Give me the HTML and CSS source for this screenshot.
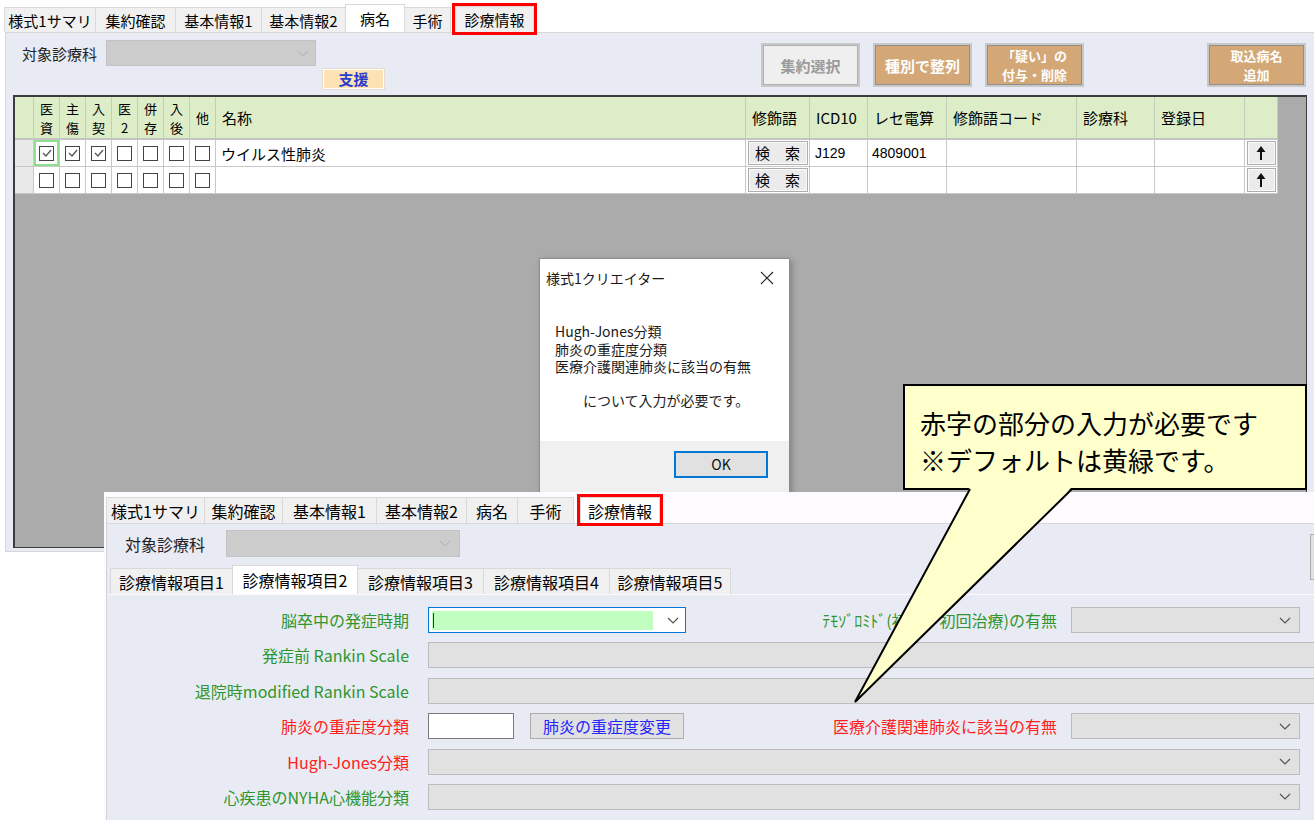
FILE: index.html
```html
<!DOCTYPE html>
<html lang="ja">
<head>
<meta charset="utf-8">
<title>様式1クリエイター</title>
<link rel="stylesheet" href="styles.css">
</head>
<body>
<div class="screen">

  <section class="win1">
    <nav class="tabs1">
      <span class="tab t1-sum">様式1サマリ</span>
      <span class="tab t1-agg">集約確認</span>
      <span class="tab t1-b1">基本情報1</span>
      <span class="tab t1-b2">基本情報2</span>
      <span class="tab t1-dis active">病名</span>
      <span class="tab t1-op">手術</span>
      <span class="tab t1-info marked">診療情報</span>
    </nav>
    <div class="panel1">
      <div class="toolbar">
        <div class="dept">
          <div class="dept-row">
            <span class="lbl1">対象診療科</span>
            <div class="combo1">
              <svg class="chev" width="12" height="7" viewBox="0 0 12 7"><path d="M1 1 L6 6 L11 1" fill="none" stroke="#b8b8b8" stroke-width="1.2"/></svg>
            </div>
          </div>
          <div class="shien">支援</div>
        </div>
        <div class="actions">
          <div class="abtn abtn-dis">集約選択</div>
          <div class="abtn tan">種別で整列</div>
          <div class="abtn tan two"><span>「疑い」の</span><span>付与・削除</span></div>
          <div class="abtn tan two far"><span>取込病名</span><span>追加</span></div>
        </div>
      </div>

      <div class="grid">
        <div class="gtable">
          <div class="hc rh"></div>
          <div class="hc vt"><span>医</span><span>資</span></div>
          <div class="hc vt"><span>主</span><span>傷</span></div>
          <div class="hc vt"><span>入</span><span>契</span></div>
          <div class="hc vt"><span>医</span><span>2</span></div>
          <div class="hc vt"><span>併</span><span>存</span></div>
          <div class="hc vt"><span>入</span><span>後</span></div>
          <div class="hc vt"><span>他</span></div>
          <div class="hc">名称</div>
          <div class="hc">修飾語</div>
          <div class="hc">ICD10</div>
          <div class="hc">レセ電算</div>
          <div class="hc">修飾語コード</div>
          <div class="hc">診療科</div>
          <div class="hc">登録日</div>
          <div class="hc"></div>

          <div class="dc rh"></div>
          <div class="dc cbc focus"><span class="cb"><svg width="12" height="12" viewBox="0 0 12 12"><path d="M2 6 L5 9 L10 3" fill="none" stroke="#555" stroke-width="1.3"/></svg></span></div>
          <div class="dc cbc"><span class="cb"><svg width="12" height="12" viewBox="0 0 12 12"><path d="M2 6 L5 9 L10 3" fill="none" stroke="#555" stroke-width="1.3"/></svg></span></div>
          <div class="dc cbc"><span class="cb"><svg width="12" height="12" viewBox="0 0 12 12"><path d="M2 6 L5 9 L10 3" fill="none" stroke="#555" stroke-width="1.3"/></svg></span></div>
          <div class="dc cbc"><span class="cb"></span></div>
          <div class="dc cbc"><span class="cb"></span></div>
          <div class="dc cbc"><span class="cb"></span></div>
          <div class="dc cbc"><span class="cb"></span></div>
          <div class="dc">ウイルス性肺炎</div>
          <div class="dc btnc"><span class="kbtn">検　索</span></div>
          <div class="dc code">J129</div>
          <div class="dc num">4809001</div>
          <div class="dc"></div>
          <div class="dc"></div>
          <div class="dc"></div>
          <div class="dc btnc"><span class="ubtn"><svg width="10" height="14" viewBox="0 0 10 14"><path d="M5 0 L9.5 6 L6 6 L6 14 L4 14 L4 6 L0.5 6 Z" fill="#111"/></svg></span></div>

          <div class="dc rh"></div>
          <div class="dc cbc"><span class="cb"></span></div>
          <div class="dc cbc"><span class="cb"></span></div>
          <div class="dc cbc"><span class="cb"></span></div>
          <div class="dc cbc"><span class="cb"></span></div>
          <div class="dc cbc"><span class="cb"></span></div>
          <div class="dc cbc"><span class="cb"></span></div>
          <div class="dc cbc"><span class="cb"></span></div>
          <div class="dc"></div>
          <div class="dc btnc"><span class="kbtn">検　索</span></div>
          <div class="dc"></div>
          <div class="dc"></div>
          <div class="dc"></div>
          <div class="dc"></div>
          <div class="dc"></div>
          <div class="dc btnc"><span class="ubtn"><svg width="10" height="14" viewBox="0 0 10 14"><path d="M5 0 L9.5 6 L6 6 L6 14 L4 14 L4 6 L0.5 6 Z" fill="#111"/></svg></span></div>
        </div>
      </div>
    </div>
  </section>

  <div class="dialog">
    <div class="dlg-title">
      <span>様式1クリエイター</span>
      <svg class="dlg-x" width="14" height="14" viewBox="0 0 14 14"><path d="M1 1 L13 13 M13 1 L1 13" stroke="#222" stroke-width="1.1"/></svg>
    </div>
    <div class="dlg-body">
      <p>Hugh-Jones分類</p>
      <p>肺炎の重症度分類</p>
      <p>医療介護関連肺炎に該当の有無</p>
      <p class="dlg-ind">について入力が必要です。</p>
    </div>
    <div class="dlg-foot"><div class="ok">OK</div></div>
  </div>

  <section class="win2">
    <nav class="tabs2">
      <span class="tab2 t2-sum">様式1サマリ</span>
      <span class="tab2 t2-agg">集約確認</span>
      <span class="tab2 t2-b1">基本情報1</span>
      <span class="tab2 t2-b2">基本情報2</span>
      <span class="tab2 t2-dis">病名</span>
      <span class="tab2 t2-op">手術</span>
      <span class="tab2 t2-info marked2">診療情報</span>
    </nav>
    <div class="panel2">
      <div class="dept2">
        <span class="lbl2">対象診療科</span>
        <div class="combo2">
          <svg class="chev" width="12" height="7" viewBox="0 0 12 7"><path d="M1 1 L6 6 L11 1" fill="none" stroke="#b8b8b8" stroke-width="1.2"/></svg>
        </div>
        <div class="edge"></div>
      </div>
      <nav class="subtabs">
        <span class="stab st1">診療情報項目1</span>
        <span class="stab st2 active">診療情報項目2</span>
        <span class="stab st3">診療情報項目3</span>
        <span class="stab st4">診療情報項目4</span>
        <span class="stab st5">診療情報項目5</span>
      </nav>
      <div class="form">
        <div class="frow">
          <label class="flbl green">脳卒中の発症時期</label>
          <div class="sel sel-focus w258">
            <span class="fill"><span class="caret"></span></span>
            <svg class="chev" width="12" height="7" viewBox="0 0 12 7"><path d="M1 1 L6 6 L11 1" fill="none" stroke="#555" stroke-width="1.2"/></svg>
          </div>
          <label class="rlbl green r1">ﾃﾓｿﾞﾛﾐﾄﾞ(初発・初回治療)の有無</label>
          <div class="sel w229">
            <svg class="chev" width="12" height="7" viewBox="0 0 12 7"><path d="M1 1 L6 6 L11 1" fill="none" stroke="#555" stroke-width="1.2"/></svg>
          </div>
        </div>
        <div class="frow">
          <label class="flbl green">発症前 Rankin Scale</label>
          <div class="sel wide"></div>
        </div>
        <div class="frow">
          <label class="flbl green">退院時modified Rankin Scale</label>
          <div class="sel wide"></div>
        </div>
        <div class="frow">
          <label class="flbl red">肺炎の重症度分類</label>
          <div class="txt"></div>
          <div class="pbtn">肺炎の重症度変更</div>
          <label class="rlbl red r4">医療介護関連肺炎に該当の有無</label>
          <div class="sel w229">
            <svg class="chev" width="12" height="7" viewBox="0 0 12 7"><path d="M1 1 L6 6 L11 1" fill="none" stroke="#555" stroke-width="1.2"/></svg>
          </div>
        </div>
        <div class="frow">
          <label class="flbl red">Hugh-Jones分類</label>
          <div class="sel w872">
            <svg class="chev" width="12" height="7" viewBox="0 0 12 7"><path d="M1 1 L6 6 L11 1" fill="none" stroke="#555" stroke-width="1.2"/></svg>
          </div>
        </div>
        <div class="frow">
          <label class="flbl green">心疾患のNYHA心機能分類</label>
          <div class="sel w872">
            <svg class="chev" width="12" height="7" viewBox="0 0 12 7"><path d="M1 1 L6 6 L11 1" fill="none" stroke="#555" stroke-width="1.2"/></svg>
          </div>
        </div>
      </div>
    </div>
  </section>

  <div class="callout">
    <p>赤字の部分の入力が必要です</p>
    <p>※デフォルトは黄緑です。</p>
  </div>
  <svg class="tail" width="240" height="240" viewBox="0 0 240 240">
    <polygon points="130,7 15,222 232,7" fill="#ffffcc"/>
    <path d="M130 9 L15 222 L232 9" fill="none" stroke="#000" stroke-width="2" stroke-linejoin="miter"/>
  </svg>

</div>
</body>
</html>
```

FILE: styles.css
```css
* { box-sizing: border-box; margin: 0; padding: 0; }
html, body { width: 1314px; height: 820px; overflow: hidden; background: #fff; }
body {
  font-family: "Noto Sans CJK JP", "Noto Sans", sans-serif;
  color: #000;
}
.screen { position: relative; width: 1314px; height: 820px; overflow: hidden; }

/* ---------- window 1 ---------- */
.win1 { height: 552px; display: flex; flex-direction: column; }
.tabs1 { display: flex; align-items: flex-end; height: 32px; padding-left: 4px; flex: none; }
.tab {
  height: 25px; display: flex; align-items: center; justify-content: center;
  background: #f0f0f0; border: 1px solid #d9d9d9; border-bottom: none;
  margin-right: -1px; font-size: 15px; line-height: 1; white-space: nowrap;
}
.tab.active { height: 28px; background: #fff; position: relative; z-index: 1; }
.tab.marked { outline: 3px solid #ff0000; margin-left: 5px; position: relative; z-index: 2; height: 26px; }
.t1-sum { width: 92px; }
.t1-agg { width: 81px; }
.t1-b1 { width: 87px; }
.t1-b2 { width: 85px; }
.t1-dis { width: 60px; }
.t1-op { width: 47px; }
.t1-info { width: 79px; }

.panel1 {
  flex: 1; margin-left: 5px; background: #e9ebf4;
  border: 1px solid #d6d6d6; border-right: none;
  display: flex; flex-direction: column;
}
.toolbar { height: 62px; display: flex; padding: 7px 8px 0 16px; flex: none; }
.dept { display: flex; flex-direction: column; }
.dept-row { display: flex; align-items: center; height: 26px; }
.lbl1 { width: 84px; font-size: 15px; line-height: 1; color: #222; }
.combo1 {
  width: 210px; height: 26px; background: #cccccc; border: 1px solid #c2c2c2;
  display: flex; align-items: center; justify-content: flex-end; padding-right: 6px;
}
.shien {
  margin: 3px 0 0 301px; width: 61px; height: 20px; background: #fde2b4;
  border: 1px solid #fff; box-shadow: 0 0 0 1px #e4dccf;
  color: #2b3ccc; font-weight: bold; font-size: 15px; line-height: 18px; text-align: center;
}
.actions { display: flex; margin-left: auto; margin-top: 3px; gap: 13px; }
.abtn {
  width: 99px; height: 44px; display: flex; flex-direction: column; align-items: center; justify-content: center;
  text-align: center; font-size: 15px; line-height: 1; font-weight: bold;
  border: 2px solid #c8c8c8; box-shadow: inset 0 0 0 1px #8e8e8e;
}
.abtn.two { font-size: 13px; }
.abtn span { display: block; height: 19px; line-height: 19px; white-space: nowrap; }
.abtn-dis { background: #efefef; color: #9b9b9b; box-shadow: inset 0 0 0 1px #b0b0b0; }
.tan { background: #d3a876; color: #fff; }
.far { margin-left: 110px; }

.grid {
  margin-left: 7px; width: 1294px; height: 453px; background: #ababab;
  border-top: 2px solid #3c3c3c; border-left: 2px solid #3c3c3c;
  border-right: 1px solid #3c3c3c; border-bottom: 1px solid #3c3c3c;
}
.gtable {
  display: grid;
  grid-template-columns: 19px repeat(7, 26px) 530px 64px 58px 79px 130px 78px 90px 33px;
  grid-template-rows: 43px 27px 27px;
  width: 1264px;
}
.hc {
  background: #dcedc8; border-right: 1px solid #c3cdb9; border-bottom: 2px solid #c4c4c4;
  font-size: 15px; line-height: 1; display: flex; align-items: center; padding-left: 6px;
  white-space: nowrap;
}
.hc.vt {
  padding: 0; flex-direction: column; justify-content: center; align-items: center;
  font-size: 13px; line-height: 19px;
}
.hc.vt span { display: block; height: 19px; line-height: 19px; }
.hc.rh { padding: 0; }
.dc {
  background: #fff; border-right: 1px solid #c8c8c8; border-bottom: 1px solid #c8c8c8;
  font-size: 15px; line-height: 1; display: flex; align-items: center; padding-left: 5px;
  white-space: nowrap;
}
.dc.rh { background: #e9e9e9; padding: 0; }
.dc.cbc { padding: 0; justify-content: center; }
.dc.focus { box-shadow: inset 0 0 0 2px #8fdf8f; }
.cb {
  width: 15px; height: 15px; border: 1px solid #444; background: #fff;
  display: flex; align-items: center; justify-content: center;
}
.dc.btnc { padding: 0 1px; justify-content: center; }
.kbtn {
  width: 60px; height: 24px; background: #ebebeb; border: 1px solid #adadad;
  box-shadow: inset 0 0 0 1px #fafafa; font-size: 15px; line-height: 22px; text-align: center;
}
.ubtn {
  width: 29px; height: 24px; background: #ebebeb; border: 1px solid #adadad;
  box-shadow: inset 0 0 0 1px #fafafa; display: flex; align-items: center; justify-content: center;
}
.code { font-family: "Liberation Sans", sans-serif; font-size: 14px; }
.num { font-family: "Liberation Sans Narrow", "Liberation Sans", sans-serif; font-size: 14px; padding-left: 4px; }

/* ---------- dialog ---------- */
.dialog {
  position: absolute; left: 539px; top: 258px; width: 251px; height: 250px;
  background: #fff; border: 1px solid #8c8c8c; box-shadow: 2px 2px 6px rgba(0,0,0,0.25);
  display: flex; flex-direction: column; font-size: 14px; color: #1b1b1b;
}
.dlg-title { height: 38px; display: flex; align-items: center; padding: 0 15px 0 6px; justify-content: space-between; flex: none; }
.dlg-title span { font-size: 14px; line-height: 1; }
.dlg-body { height: 144px; padding: 26px 0 0 15px; flex: none; }
.dlg-body p { line-height: 17.5px; white-space: nowrap; }
.dlg-ind { margin: 16px 0 0 28px; }
.dlg-foot { flex: 1; background: #f0f0f0; padding: 10px 21px 0 0; display: flex; justify-content: flex-end; align-items: flex-start; }
.ok {
  width: 94px; height: 27px; background: #e1e1e1; border: 2px solid #0078d7;
  text-align: center; font-size: 14px; line-height: 23px; color: #111;
}

/* ---------- window 2 ---------- */
.win2 {
  position: absolute; left: 104px; top: 492px; width: 1210px; height: 328px;
  background: #fdfbff; display: flex; flex-direction: column; overflow: hidden;
}
.tabs2 { display: flex; align-items: flex-end; height: 31px; padding-left: 2px; flex: none; }
.tab2 {
  height: 26px; display: flex; align-items: center; justify-content: center;
  background: #f0f0f0; border: 1px solid #d9d9d9; border-bottom: none;
  margin-right: -1px; font-size: 16px; line-height: 1; white-space: nowrap;
}
.tab2.marked2 { outline: 3px solid #ff0000; background: #fff; margin-left: 7px; height: 26px; position: relative; z-index: 2; }
.t2-sum { width: 99px; }
.t2-agg { width: 79px; }
.t2-b1 { width: 95px; }
.t2-b2 { width: 91px; }
.t2-dis { width: 52px; }
.t2-op { width: 57px; }
.t2-info { width: 80px; }

.panel2 {
  flex: 1; margin-left: 2px; background: #e9ebf4;
  border-left: 1px solid #d2d2d2; border-top: 1px solid #d9d9d9;
  display: flex; flex-direction: column;
}
.dept2 { display: flex; align-items: center; height: 27px; margin-top: 6px; padding-left: 18px; flex: none; }
.lbl2 { width: 101px; font-size: 16px; line-height: 1; color: #222; }
.combo2 {
  width: 234px; height: 27px; background: #cccccc; border: 1px solid #c2c2c2;
  display: flex; align-items: center; justify-content: flex-end; padding-right: 8px;
}
.edge {
  margin-left: auto; width: 12px; height: 46px; margin-right: -8px; align-self: flex-start;
  margin-top: 4px; border: 1px solid #adadad; background: #e1e1e1;
}
.subtabs { display: flex; align-items: flex-end; height: 29px; margin-top: 8px; padding-left: 3px; flex: none; }
.stab {
  height: 26px; display: flex; align-items: center; justify-content: center;
  background: #f0f0f0; border: 1px solid #d9d9d9; border-bottom: none;
  margin-right: -1px; font-size: 16px; line-height: 1; white-space: nowrap;
}
.stab.active { height: 29px; background: #fff; position: relative; z-index: 1; }
.st1 { width: 123px; }
.st2 { width: 126px; }
.st3 { width: 127px; }
.st4 { width: 127px; }
.st5 { width: 122px; }

.form {
  flex: 1; border-top: 1px solid #fafafa; display: flex; flex-direction: column;
  gap: 9.4px; padding-top: 12px;
}
.frow { display: flex; align-items: center; height: 26px; flex: none; }
.flbl { width: 302px; margin-right: 19px; text-align: right; font-size: 16px; line-height: 1; white-space: nowrap; flex: none; }
.rlbl { text-align: right; font-size: 16px; line-height: 1; white-space: nowrap; margin-right: 14px; flex: none; }
.r1 { width: 371px; }
.r4 { width: 373px; }
.green { color: #2f962f; }
.red { color: #ff2020; }
.sel {
  height: 26px; background: #e1e1e1; border: 1px solid #bcbcbc; flex: none;
  display: flex; align-items: center; justify-content: flex-end; padding-right: 8px;
}
.sel-focus { background: #fff; border-color: #0078d7; justify-content: space-between; padding: 3px 6px 3px 3px; }
.fill { width: 221px; height: 19px; background: #c0ffc0; display: flex; align-items: center; padding-left: 1px; }
.caret { width: 1px; height: 15px; background: #333; }
.w258 { width: 258px; }
.w229 { width: 229px; }
.w872 { width: 872px; }
.wide { width: 900px; }
.txt { width: 86px; height: 26px; background: #fff; border: 1px solid #7a7a7a; flex: none; }
.pbtn {
  margin-left: 16px; width: 154px; height: 26px; background: #e1e1e1; border: 1px solid #adadad;
  color: #2424ff; font-size: 16px; line-height: 24px; text-align: center; flex: none;
}

/* ---------- callout ---------- */
.callout {
  position: absolute; left: 903px; top: 384px; width: 404px; height: 106px;
  background: #ffffcc; border: 2px solid #000; padding: 18px 0 0 15px;
  font-size: 26px; line-height: 37px; color: #000;
}
.callout p { white-space: nowrap; }
.tail { position: absolute; left: 840px; top: 480px; }
```
